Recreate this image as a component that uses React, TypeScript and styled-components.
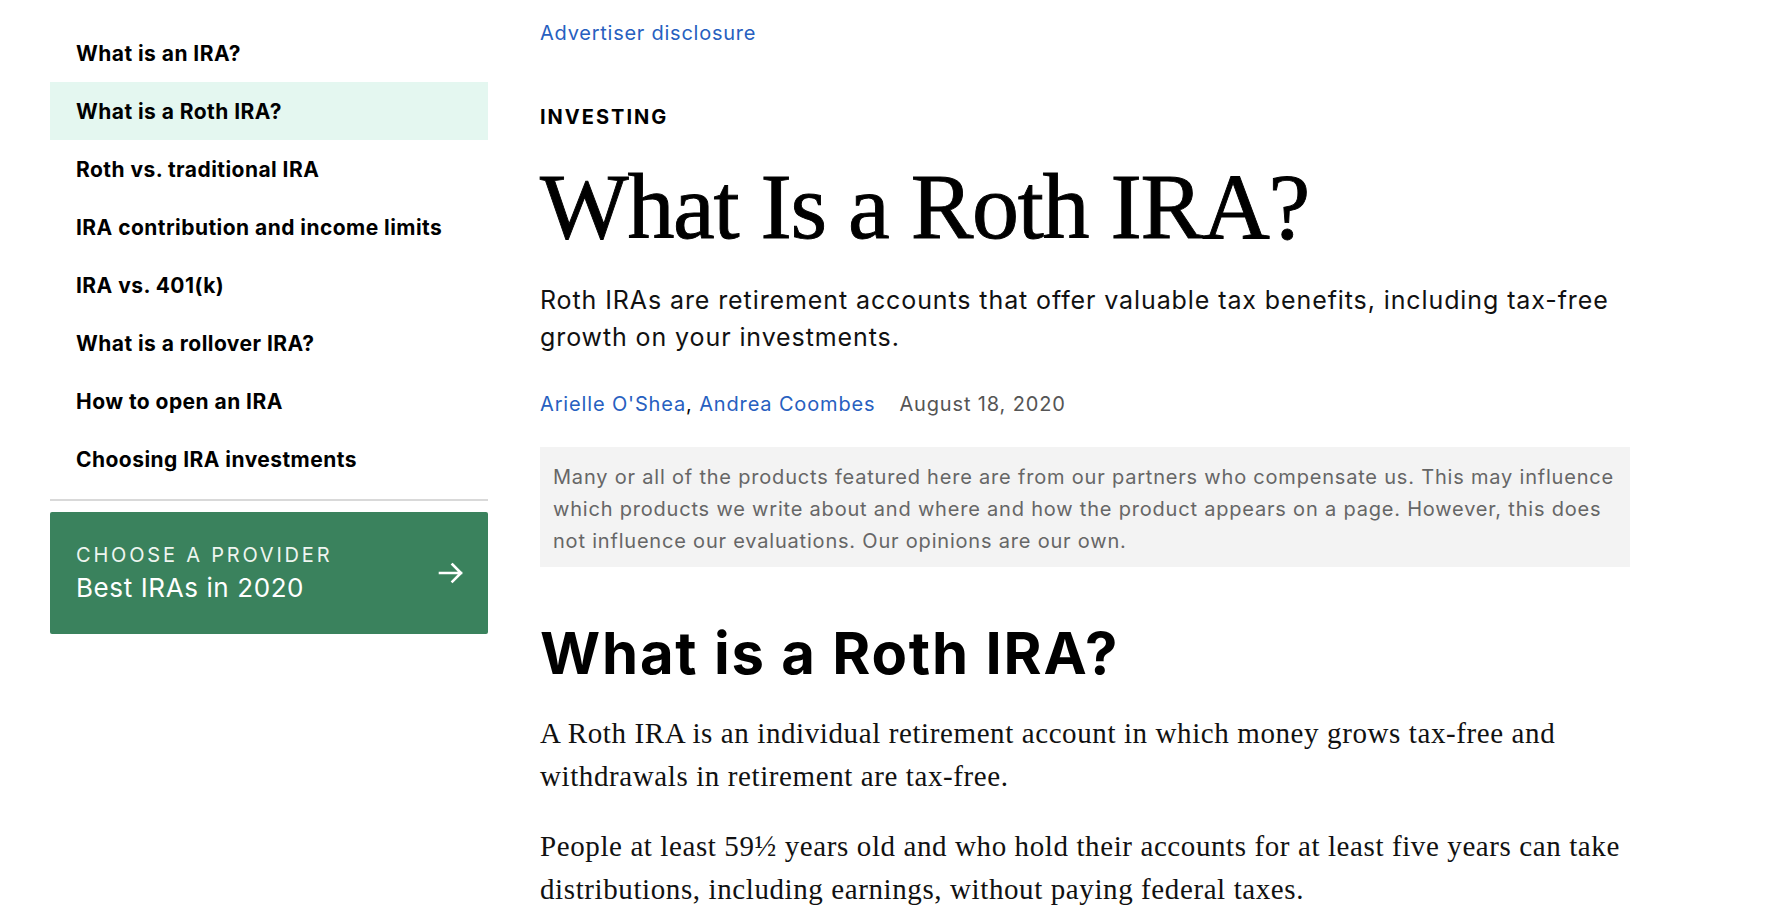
import React from "react";
import styled, { createGlobalStyle } from "styled-components";

const GlobalStyle = createGlobalStyle`
  html, body {
    margin: 0;
    padding: 0;
    background: #ffffff;
  }
  body {
    font-family: Inter, "Open Sans", Arial, sans-serif;
    color: #000000;
    -webkit-font-smoothing: antialiased;
  }
  * { box-sizing: border-box; }
`;

const Page = styled.div`
  display: flex;
  align-items: flex-start;
  gap: 52px;
  padding-left: 50px;
  width: 1772px;
  height: 924px;
  overflow: hidden;
`;

const Sidebar = styled.aside`
  width: 438px;
  flex: none;
  padding-top: 24px;
  display: flex;
  flex-direction: column;
`;

const NavList = styled.nav`
  display: flex;
  flex-direction: column;
`;

const NavItem = styled.a<{ $active?: boolean }>`
  display: block;
  height: 58px;
  line-height: 59px;
  padding-left: 26px;
  font-family: Inter, sans-serif;
  font-weight: 700;
  font-size: 21px;
  letter-spacing: 0.45px;
  color: #000;
  text-decoration: none;
  background: ${(p) => (p.$active ? "#e4f7f0" : "transparent")};
`;

const Divider = styled.hr`
  border: none;
  height: 2px;
  background: #d9d9d9;
  margin: 11px 0 11px 0;
`;

const ProviderCard = styled.a`
  display: flex;
  align-items: center;
  justify-content: space-between;
  height: 122px;
  padding: 0 24px 0 26px;
  background: #3a825d;
  border-radius: 2px;
  color: #ffffff;
  text-decoration: none;
`;

const ProviderText = styled.div`
  display: flex;
  flex-direction: column;
`;

const ProviderLabel = styled.span`
  font-size: 20px;
  line-height: 26px;
  letter-spacing: 2.8px;
  text-transform: uppercase;
  color: #eef5f0;
`;

const ProviderTitle = styled.span`
  font-size: 26px;
  line-height: 34px;
  letter-spacing: 0.6px;
  margin-top: 3px;
  color: #ffffff;
`;

const Main = styled.main`
  width: 1090px;
  flex: none;
  padding-top: 21px;
  display: flex;
  flex-direction: column;
  align-items: flex-start;
`;

const Disclosure = styled.a`
  font-size: 20px;
  line-height: 24px;
  letter-spacing: 0.75px;
  color: #2760c0;
  text-decoration: none;
`;

const Category = styled.div`
  margin-top: 60px;
  font-size: 20px;
  line-height: 24px;
  font-weight: 700;
  letter-spacing: 2px;
  text-transform: uppercase;
`;

const Title = styled.h1`
  margin: 27px 0 0 0;
  font-family: "Liberation Serif", "Times New Roman", serif;
  font-weight: 400;
  font-size: 94px;
  line-height: 100px;
  letter-spacing: -1.3px;
  -webkit-text-stroke: 0.9px #000;
  color: #000;
`;

const Dek = styled.p`
  margin: 26px 0 0 0;
  font-size: 25px;
  line-height: 37px;
  letter-spacing: 0.9px;
  color: #111;
`;

const Byline = styled.div`
  margin-top: 36px;
  display: flex;
  align-items: baseline;
  gap: 24px;
  font-size: 20px;
  line-height: 24px;
  letter-spacing: 0.85px;
`;

const Authors = styled.span`
  color: #000;
`;

const AuthorLink = styled.a`
  color: #2760c0;
  text-decoration: none;
`;

const PubDate = styled.span`
  color: #555555;
`;

const Disclaimer = styled.p`
  margin: 31px 0 0 0;
  width: 100%;
  padding: 14px 6px 10px 13px;
  background: #f3f3f3;
  color: #666666;
  font-size: 20px;
  line-height: 32px;
  letter-spacing: 0.8px;
`;

const SectionHeading = styled.h2`
  margin: 51px 0 0 0;
  font-size: 58px;
  line-height: 70px;
  font-weight: 700;
  letter-spacing: 1.8px;
  color: #000;
`;

const BodyText = styled.p<{ $first?: boolean }>`
  margin: ${(p) => (p.$first ? "24px" : "27px")} 0 0 0;
  font-family: "Liberation Serif", "Times New Roman", serif;
  font-size: 29px;
  line-height: 43px;
  letter-spacing: 0.6px;
  color: #111;
`;

const ArrowIcon = () => (
  <svg width="26" height="22" viewBox="0 0 26 22" fill="none">
    <path
      d="M2 11 H23 M14.5 2.5 L23 11 L14.5 19.5"
      stroke="#ffffff"
      strokeWidth="2.6"
      strokeLinecap="square"
      strokeLinejoin="miter"
    />
  </svg>
);

const navItems = [
  "What is an IRA?",
  "What is a Roth IRA?",
  "Roth vs. traditional IRA",
  "IRA contribution and income limits",
  "IRA vs. 401(k)",
  "What is a rollover IRA?",
  "How to open an IRA",
  "Choosing IRA investments",
];

export default function App() {
  return (
    <>
      <GlobalStyle />
      <Page>
        <Sidebar>
          <NavList>
            {navItems.map((item, i) => (
              <NavItem key={item} href="#" $active={i === 1}>
                {item}
              </NavItem>
            ))}
          </NavList>
          <Divider />
          <ProviderCard href="#">
            <ProviderText>
              <ProviderLabel>Choose a provider</ProviderLabel>
              <ProviderTitle>Best IRAs in 2020</ProviderTitle>
            </ProviderText>
            <ArrowIcon />
          </ProviderCard>
        </Sidebar>
        <Main>
          <Disclosure href="#">Advertiser disclosure</Disclosure>
          <Category>Investing</Category>
          <Title>What Is a Roth IRA?</Title>
          <Dek>
            Roth IRAs are retirement accounts that offer valuable tax benefits,
            including tax-free growth on your investments.
          </Dek>
          <Byline>
            <Authors>
              <AuthorLink href="#">Arielle O'Shea</AuthorLink>,{" "}
              <AuthorLink href="#">Andrea Coombes</AuthorLink>
            </Authors>
            <PubDate>August 18, 2020</PubDate>
          </Byline>
          <Disclaimer>
            Many or all of the products featured here are from our partners who
            compensate us. This may influence which products we write about and
            where and how the product appears on a page. However, this does not
            influence our evaluations. Our opinions are our own.
          </Disclaimer>
          <SectionHeading>What is a Roth IRA?</SectionHeading>
          <BodyText $first>
            A Roth IRA is an individual retirement account in which money grows
            tax-free and withdrawals in retirement are tax-free.
          </BodyText>
          <BodyText>
            People at least 59½ years old and who hold their accounts for at
            least five years can take distributions, including earnings, without
            paying federal taxes.
          </BodyText>
        </Main>
      </Page>
    </>
  );
}
